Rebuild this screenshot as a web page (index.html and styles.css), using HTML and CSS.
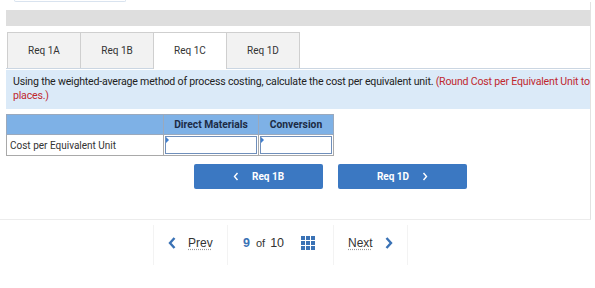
FILE: index.html
```html
<!DOCTYPE html>
<html lang="en">
<head>
    <meta charset="UTF-8">
    <meta name="viewport" content="width=device-width, initial-scale=1.0">
    <title>Req 1C</title>
    <link rel="stylesheet" href="styles.css">
</head>
<body>
    <div class="top-field"></div>
    <div class="panel">
        <div class="gray-bar"></div>
        <div class="tabs">
            <div class="tab">Req 1A</div>
            <div class="tab">Req 1B</div>
            <div class="tab active">Req 1C</div>
            <div class="tab">Req 1D</div>
        </div>
        <div class="info">
            Using the weighted-average method of process costing, calculate the cost per equivalent unit. <span class="note">(Round Cost per Equivalent Unit to<br>places.)</span>
        </div>
        <table class="grid">
            <tr>
                <th class="label-col"></th>
                <th class="dm-col">Direct Materials</th>
                <th class="conv-col">Conversion</th>
            </tr>
            <tr>
                <td class="row-label">Cost per Equivalent Unit</td>
                <td class="input-cell"><div class="answer"></div></td>
                <td class="input-cell"><div class="answer"></div></td>
            </tr>
        </table>
        <div class="nav-buttons">
            <button class="nav-btn">
                <svg width="6" height="9" viewBox="0 0 6 9"><path d="M4.5 1 L1.5 4.5 L4.5 8" fill="none" stroke="#fff" stroke-width="1.4"/></svg>
                Req 1B
            </button>
            <button class="nav-btn">
                Req 1D
                <svg width="6" height="9" viewBox="0 0 6 9"><path d="M1.5 1 L4.5 4.5 L1.5 8" fill="none" stroke="#fff" stroke-width="1.4"/></svg>
            </button>
        </div>
    </div>
    <div class="pager">
        <div class="pager-item prev">
            <svg width="8" height="12" viewBox="0 0 8 12"><path d="M6.5 1 L2 6 L6.5 11" fill="none" stroke="#3a72b5" stroke-width="2.4"/></svg>
            <span class="pager-link">Prev</span>
        </div>
        <div class="pager-item count">
            <span class="current">9</span>
            <span class="of">of</span>
            <span class="total">10</span>
            <svg class="grid-icon" width="14" height="14" viewBox="0 0 14 14">
                <rect x="0" y="0" width="4" height="4"/><rect x="5" y="0" width="4" height="4"/><rect x="10" y="0" width="4" height="4"/>
                <rect x="0" y="5" width="4" height="4"/><rect x="5" y="5" width="4" height="4"/><rect x="10" y="5" width="4" height="4"/>
                <rect x="0" y="10" width="4" height="4"/><rect x="5" y="10" width="4" height="4"/><rect x="10" y="10" width="4" height="4"/>
            </svg>
        </div>
        <div class="pager-item next">
            <span class="pager-link">Next</span>
            <svg width="8" height="12" viewBox="0 0 8 12"><path d="M1.5 1 L6 6 L1.5 11" fill="none" stroke="#3a72b5" stroke-width="2.4"/></svg>
        </div>
    </div>
</body>
</html>
```

FILE: styles.css
```css
* {
    margin: 0;
    padding: 0;
    box-sizing: border-box;
}

body {
    font-family: Roboto, 'Liberation Sans', sans-serif;
    background-color: #fff;
    color: #333;
    width: 595px;
    height: 288px;
    overflow: hidden;
}

.top-field {
    width: 112px;
    height: 2px;
    margin-left: 14px;
    border: 1px solid #d9e3ef;
    border-top: none;
    border-radius: 0 0 4px 4px;
}

.panel {
    width: 591px;
    height: 218px;
    padding-left: 6px;
    padding-top: 8px;
    border-right: 1px solid #e2e2e2;
    border-bottom: 1px solid #ececec;
}

.gray-bar {
    height: 16px;
    background: #dedede;
}

.tabs {
    display: flex;
    margin-top: 6px;
    padding-left: 1px;
    border-bottom: 1px solid #cbd6e2;
}

.tab {
    width: 74px;
    height: 36px;
    display: flex;
    align-items: center;
    justify-content: center;
    font-size: 10px;
    color: #333;
    background: #f2f2f2;
    border: 1px solid #cfcfcf;
    border-bottom: none;
    margin-right: -1px;
}

.tab.active {
    background: #fff;
    position: relative;
    z-index: 1;
    margin-bottom: -1px;
    height: 37px;
    padding-bottom: 1px;
}

.info {
    margin-top: 1px;
    height: 39px;
    padding: 5px 0 0 7px;
    background: #dbeaf8;
    font-size: 10.6px;
    letter-spacing: -0.2px;
    line-height: 14px;
    color: #222;
    white-space: nowrap;
    overflow: hidden;
}

.note {
    color: #c0282f;
}

.grid {
    margin-top: 5px;
    border-collapse: collapse;
    font-size: 10px;
}

.grid th {
    height: 20px;
    background: #7eb1e6;
    border: 1px solid #9aa9bd;
    color: #1c2b45;
    font-weight: bold;
    font-size: 10.3px;
}

.label-col {
    width: 157px;
}

.dm-col {
    width: 95px;
}

.conv-col {
    width: 75px;
}

.grid td {
    height: 21px;
    border: 1px solid #a9a9a9;
}

.row-label {
    padding-left: 3px;
    color: #333;
}

.input-cell {
    padding: 1px;
}

.answer {
    height: 18px;
    border: 1px solid #6f8fbb;
    position: relative;
}

.answer::before {
    content: '';
    position: absolute;
    top: 0;
    left: 0;
    border-top: 3px solid transparent;
    border-bottom: 3px solid transparent;
    border-left: 3px solid #3f7fcf;
}

.nav-buttons {
    display: flex;
    gap: 15px;
    margin-top: 8px;
    margin-left: 188px;
}

.nav-btn {
    width: 129px;
    height: 25px;
    display: flex;
    align-items: center;
    justify-content: center;
    gap: 13px;
    background: #3b78c2;
    color: #fff;
    border: none;
    border-radius: 2px;
    font-family: Roboto, 'Liberation Sans', sans-serif;
    font-size: 10px;
    font-weight: bold;
}

.pager {
    display: flex;
    margin-top: 5px;
    margin-left: 153px;
    height: 40px;
    font-family: 'Liberation Sans', Arial, sans-serif;
}

.pager-item {
    display: flex;
    align-items: center;
    padding-bottom: 5px;
    border: 1px solid #f3f3f3;
    border-top: none;
    border-bottom: none;
    margin-right: -1px;
}

.prev {
    width: 75px;
    padding-left: 14px;
    gap: 12px;
}

.count {
    width: 107px;
    padding-left: 15px;
    font-size: 12px;
    color: #333;
}

.next {
    width: 75px;
    padding-left: 14px;
    gap: 12px;
}

.pager-link {
    font-size: 12px;
    color: #333;
    text-decoration: underline dotted #999;
    text-underline-offset: 2px;
}

.current {
    color: #3a72b5;
    font-weight: bold;
    font-size: 12.5px;
}

.of {
    margin: 0 5px 0 6px;
    font-size: 11px;
}

.total {
    font-size: 12.5px;
}

.grid-icon {
    margin-left: 17px;
    fill: #3a72b5;
}
```
